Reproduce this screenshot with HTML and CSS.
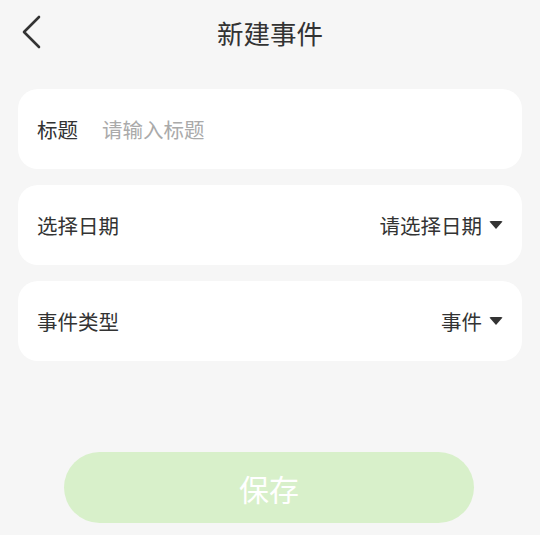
FILE: index.html
```html
<!DOCTYPE html>
<html>
<head>
    <meta charset="utf-8">
    <title>新建事件</title>
    <link rel="stylesheet" href="styles.css">
</head>
<body>
    <div class="nav-bar">
        <span class="back">
            <svg width="20" height="34" viewBox="0 0 20 34">
                <path d="M18 2 L3 17 L18 32" fill="none" stroke="#333" stroke-width="2.6" stroke-linecap="round" stroke-linejoin="round"/>
            </svg>
        </span>
        <h1 class="nav-title">新建事件</h1>
    </div>

    <div class="form-list">
        <div class="form-item">
            <span class="item-label">标题</span>
            <input class="item-input" type="text" placeholder="请输入标题">
        </div>
        <div class="form-item">
            <span class="item-label">选择日期</span>
            <span class="item-picker">请选择日期<i class="caret"></i></span>
        </div>
        <div class="form-item">
            <span class="item-label">事件类型</span>
            <span class="item-picker">事件<i class="caret"></i></span>
        </div>
    </div>

    <button class="save-btn" type="button">保存</button>
</body>
</html>
```

FILE: styles.css
```css
/* Global Styles */
body {
    margin: 0;
    padding: 0;
    background-color: #f6f6f6;
    font-family: "Noto Sans CJK SC", "Noto Sans", sans-serif;
    color: #333;
}

/* Header */
.nav-bar {
    position: relative;
    height: 64px;
    display: flex;
    align-items: center;
    justify-content: center;
}

.back {
    position: absolute;
    left: 21px;
    top: 15px;
    display: flex;
}

.nav-title {
    margin: 0;
    font-size: 26.5px;
    font-weight: 400;
    color: #333;
}

/* Form rows */
.form-list {
    margin: 25px 18px 0 18px;
    display: flex;
    flex-direction: column;
    gap: 16px;
}

.form-item {
    height: 80px;
    background-color: #fff;
    border-radius: 20px;
    padding: 0 19px;
    display: flex;
    align-items: center;
    font-size: 20.5px;
}

.item-label {
    color: #333;
}

.item-input {
    flex: 1;
    margin-left: 24px;
    border: none;
    outline: none;
    padding: 0;
    font-family: inherit;
    font-size: 20.5px;
    color: #333;
    background: transparent;
}

.item-input::placeholder {
    color: #aaa;
}

.item-picker {
    margin-left: auto;
    display: flex;
    align-items: center;
    color: #333;
}

.caret {
    margin-left: 7px;
    width: 0;
    height: 0;
    border-left: 7px solid transparent;
    border-right: 7px solid transparent;
    border-top: 8px solid #333;
    border-radius: 2px;
}

/* Save button */
.save-btn {
    display: block;
    margin: 91px 0 0 64px;
    width: 410px;
    height: 71px;
    border: none;
    border-radius: 36px;
    background-color: #d8f0ca;
    color: #fff;
    font-family: inherit;
    font-size: 30px;
    cursor: pointer;
}
```
